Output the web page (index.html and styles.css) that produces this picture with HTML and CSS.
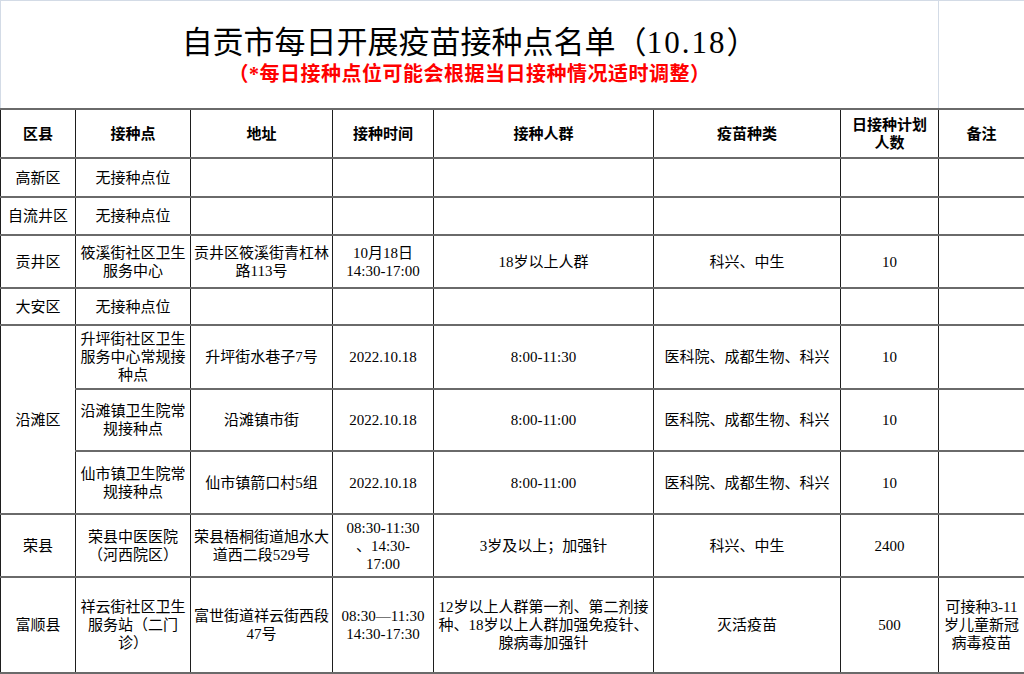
FILE: index.html
```html
<!DOCTYPE html>
<html lang="zh-CN">
<head>
<meta charset="utf-8">
<title>自贡市每日开展疫苗接种点名单</title>
<link rel="stylesheet" href="styles.css">
</head>
<body>
<div class="head">
  <div class="head-main">
    <div class="title">自贡市每日开展疫苗接种点名单（<span class="num">10.18</span>）</div>
    <div class="subtitle">（*每日接种点位可能会根据当日接种情况适时调整）</div>
  </div>
  <div class="head-side"></div>
</div>
<table class="sheet">
  <colgroup>
    <col class="c1"><col class="c2"><col class="c3"><col class="c4"><col class="c5"><col class="c6"><col class="c7"><col class="c8">
  </colgroup>
  <thead>
    <tr class="r-head">
      <th>区县</th><th>接种点</th><th>地址</th><th>接种时间</th><th>接种人群</th><th>疫苗种类</th><th>日接种计划<br>人数</th><th>备注</th>
    </tr>
  </thead>
  <tbody>
    <tr class="r-39"><td>高新区</td><td>无接种点位</td><td></td><td></td><td></td><td></td><td></td><td></td></tr>
    <tr class="r-38"><td>自流井区</td><td>无接种点位</td><td></td><td></td><td></td><td></td><td></td><td></td></tr>
    <tr class="r-53"><td>贡井区</td><td>筱溪街社区卫生<br>服务中心</td><td>贡井区筱溪街青杠林<br>路113号</td><td>10月18日<br>14:30-17:00</td><td>18岁以上人群</td><td>科兴、中生</td><td>10</td><td></td></tr>
    <tr class="r-37"><td>大安区</td><td>无接种点位</td><td></td><td></td><td></td><td></td><td></td><td></td></tr>
    <tr class="r-64"><td rowspan="3">沿滩区</td><td>升坪街社区卫生<br>服务中心常规接<br>种点</td><td>升坪街水巷子7号</td><td>2022.10.18</td><td>8:00-11:30</td><td>医科院、成都生物、科兴</td><td>10</td><td></td></tr>
    <tr class="r-62"><td>沿滩镇卫生院常<br>规接种点</td><td>沿滩镇市街</td><td>2022.10.18</td><td>8:00-11:00</td><td>医科院、成都生物、科兴</td><td>10</td><td></td></tr>
    <tr class="r-63"><td>仙市镇卫生院常<br>规接种点</td><td>仙市镇箭口村5组</td><td>2022.10.18</td><td>8:00-11:00</td><td>医科院、成都生物、科兴</td><td>10</td><td></td></tr>
    <tr class="r-63"><td>荣县</td><td>荣县中医医院<br>（河西院区）</td><td>荣县梧桐街道旭水大<br>道西二段529号</td><td>08:30-11:30<br>、14:30-<br>17:00</td><td>3岁及以上；加强针</td><td>科兴、中生</td><td>2400</td><td></td></tr>
    <tr class="r-96"><td>富顺县</td><td>祥云街社区卫生<br>服务站（二门<br>诊）</td><td>富世街道祥云街西段<br>47号</td><td>08:30—11:30<br>14:30-17:30</td><td>12岁以上人群第一剂、第二剂接<br>种、18岁以上人群加强免疫针、<br>腺病毒加强针</td><td>灭活疫苗</td><td>500</td><td>可接种3-11<br>岁儿童新冠<br>病毒疫苗</td></tr>
  </tbody>
</table>
</body>
</html>
```
FILE: styles.css
```css
html, body {
  margin: 0;
  padding: 0;
  background: #ffffff;
}
body {
  width: 1024px;
  height: 674px;
  overflow: hidden;
  font-family: "Liberation Serif", "Noto Sans CJK SC", serif;
  color: #000;
}
.head {
  display: grid;
  grid-template-columns: 937px 1fr;
  border-top: 1px solid #d3dbe6;
  border-left: 1px solid #d3dbe6;
  box-sizing: border-box;
  height: 108px;
}
.head-main {
  padding-top: 24px;
  text-align: center;
}
.head-side {
  border-left: 1px solid #d3dbe6;
}
.title {
  font-size: 31px;
  line-height: 36px;
  font-weight: normal;
  white-space: nowrap;
}
.title .num {
  letter-spacing: 2px;
}
.subtitle {
  font-size: 20px;
  line-height: 26px;
  font-weight: bold;
  color: #ff0000;
  white-space: nowrap;
  letter-spacing: 0.5px;
}
.sheet {
  border-collapse: collapse;
  table-layout: fixed;
  width: 1024px;
}
.c1 { width: 75px; }
.c2 { width: 115px; }
.c3 { width: 142px; }
.c4 { width: 101px; }
.c5 { width: 220px; }
.c6 { width: 187px; }
.c7 { width: 98px; }
.c8 { width: 86px; }
.sheet th, .sheet td {
  border-left: 1px solid #1e1e1e;
  border-right: 1px solid #1e1e1e;
  border-top: 2px solid #6a6a6a;
  border-bottom: 2px solid #6a6a6a;
  padding: 0 1px;
  text-align: center;
  vertical-align: middle;
  font-size: 15px;
  line-height: 18px;
  white-space: nowrap;
  overflow: hidden;
}
.sheet th {
  font-weight: bold;
}
.r-head { height: 49px; }
.r-39 { height: 39px; }
.r-38 { height: 38px; }
.r-53 { height: 53px; }
.r-37 { height: 37px; }
.r-64 { height: 64px; }
.r-62 { height: 62px; }
.r-63 { height: 63px; }
.r-96 { height: 96px; }
```
